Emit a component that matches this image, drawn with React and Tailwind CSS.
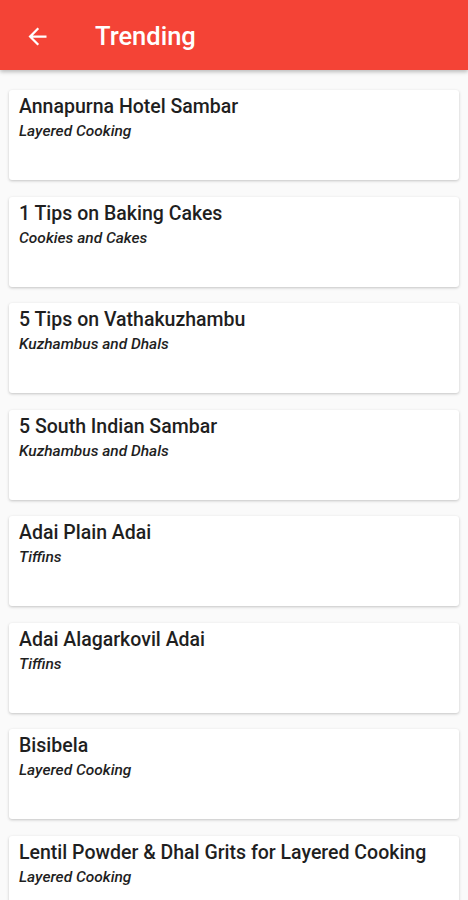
import React from "react";

const items = [
  ["Annapurna Hotel Sambar", "Layered Cooking"],
  ["1 Tips on Baking Cakes", "Cookies and Cakes"],
  ["5 Tips on Vathakuzhambu", "Kuzhambus and Dhals"],
  ["5 South Indian Sambar", "Kuzhambus and Dhals"],
  ["Adai Plain Adai", "Tiffins"],
  ["Adai Alagarkovil Adai", "Tiffins"],
  ["Bisibela", "Layered Cooking"],
  ["Lentil Powder & Dhal Grits for Layered Cooking", "Layered Cooking"],
];

export default function App() {
  return (
    <div className="w-[468px] h-[900px] overflow-hidden bg-[#fafafa]" style={{ fontFamily: "Roboto, 'Noto Sans', sans-serif" }}>
      <div className="h-[70px] bg-[#f44336] flex items-center shadow-[0_2px_4px_rgba(0,0,0,0.25)] relative z-10">
        <div className="w-[74px] flex justify-center pt-[2px]">
          <svg width="27" height="27" viewBox="0 0 24 24">
            <path d="M20 11H7.83l5.59-5.59L12 4l-8 8 8 8 1.41-1.41L7.83 13H20v-2z" fill="#fff" />
          </svg>
        </div>
        <div className="ml-[21px] text-white text-[25.5px] font-medium pt-[2px]">Trending</div>
      </div>
      <div className="flex flex-col gap-[16.5px] px-[9px] pt-[20px]">
        {items.map(([t, s], i) => (
          <div key={i} className="bg-white h-[90px] rounded-[3px] shadow-[0_1px_3px_rgba(0,0,0,0.22)] px-[10px] pt-[4px]">
            <div className="text-[19.5px] leading-[25px] font-medium text-[#1f1f1f]">{t}</div>
            <div className="text-[15.5px] leading-[20px] italic font-medium text-[#1f1f1f] mt-[2px]">{s}</div>
          </div>
        ))}
      </div>
    </div>
  );
}
